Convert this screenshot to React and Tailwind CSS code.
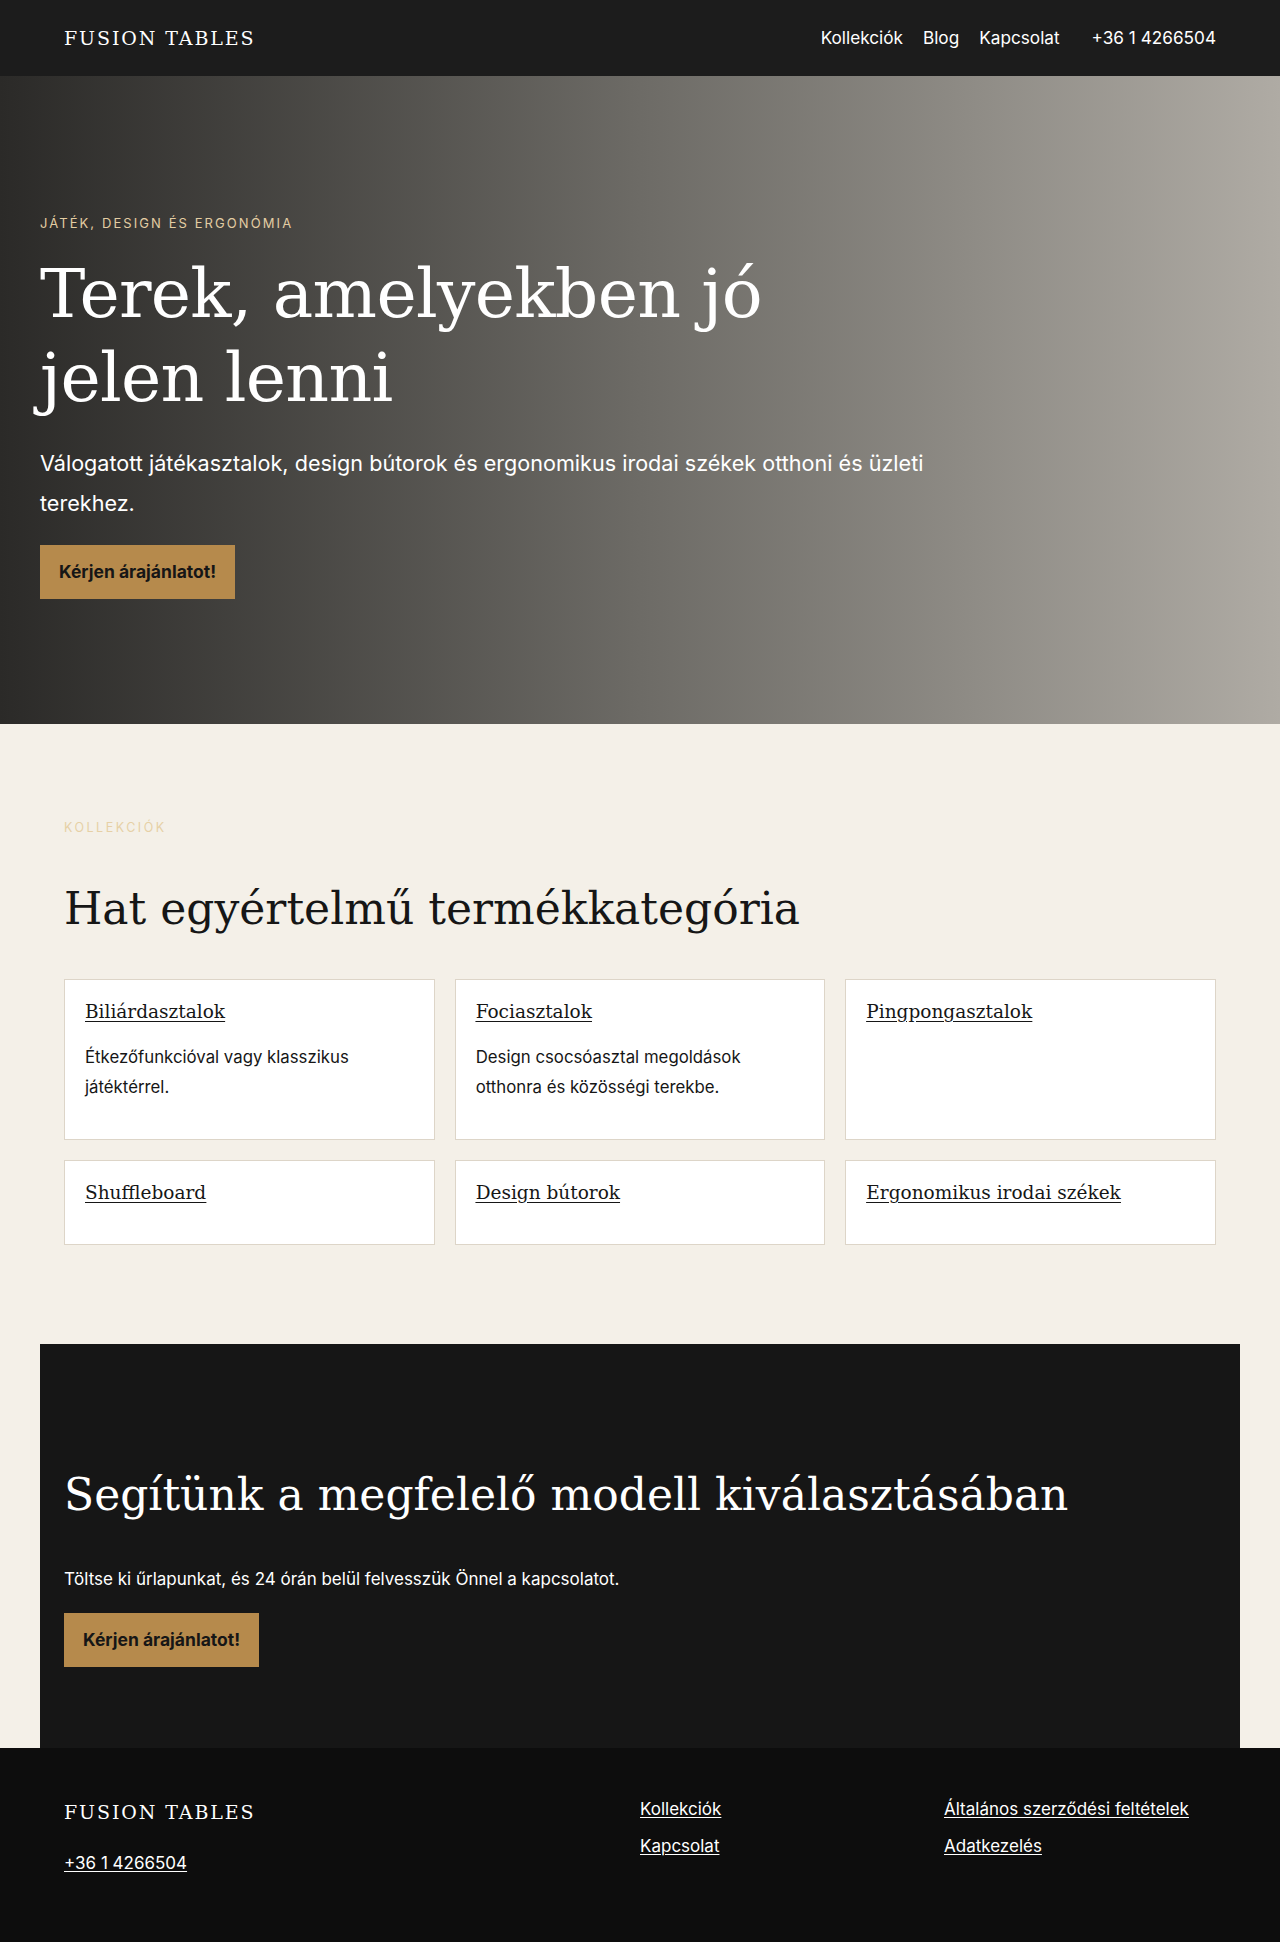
const serif = { fontFamily: '"DejaVu Serif", Georgia, serif' };

const categories = [
  { title: "Biliárdasztalok", text: "Étkezőfunkcióval vagy klasszikus játéktérrel." },
  { title: "Fociasztalok", text: "Design csocsóasztal megoldások otthonra és közösségi terekbe." },
  { title: "Pingpongasztalok" },
  { title: "Shuffleboard" },
  { title: "Design bútorok" },
  { title: "Ergonomikus irodai székek" },
];

function QuoteButton() {
  return (
    <a
      href="#"
      className="inline-block bg-[#b68a4c] px-[19px] py-[15px] text-[17.5px] font-bold leading-6 text-[#161616]"
    >
      Kérjen árajánlatot!
    </a>
  );
}

export default function App() {
  return (
    <div className="flex min-h-[1942px] flex-col bg-[#f4f0e8] font-['Inter',sans-serif] text-[#161616]">
      {/* Top bar */}
      <header className="flex h-[76px] items-center justify-between bg-[#1c1c1c] px-16 text-white">
        <a href="#" style={serif} className="text-[19px] tracking-[0.1em]">
          FUSION TABLES
        </a>
        <nav className="flex items-center text-[17.2px]">
          <a href="#" className="mr-5">Kollekciók</a>
          <a href="#" className="mr-5">Blog</a>
          <a href="#" className="mr-8">Kapcsolat</a>
          <a href="#">+36 1 4266504</a>
        </nav>
      </header>

      {/* Hero */}
      <section className="h-[648px] bg-linear-to-r from-[#2b2a28] via-[#6d6b66] to-[#afaba4] px-10 pt-[137px] text-white">
        <p className="text-[13px] leading-5 tracking-[0.16em] text-[#e3cda3]">JÁTÉK, DESIGN ÉS ERGONÓMIA</p>
        <h1 style={serif} className="mt-[19px] text-[68px] leading-[84px] tracking-[-0.01em]">
          Terek, amelyekben jó
          <br />
          jelen lenni
        </h1>
        <p className="mt-[23px] max-w-[920px] text-[21.6px] leading-10">
          Válogatott játékasztalok, design bútorok és ergonomikus irodai székek otthoni és üzleti terekhez.
        </p>
        <div className="mt-[22px]">
          <QuoteButton />
        </div>
      </section>

      {/* Collections */}
      <section className="px-16 pt-[94px] pb-[99px]">
        <p className="text-[12.5px] leading-5 tracking-[0.2em] text-[#e6d0a6]">KOLLEKCIÓK</p>
        <h2 style={serif} className="mt-[41px] text-[44px] leading-[60px] text-[#161616]">
          Hat egyértelmű termékkategória
        </h2>
        <div className="mt-[40px] grid grid-cols-3 gap-5">
          {categories.map((c) => (
            <div key={c.title} className="border border-[#ddd5c8] bg-white px-5 pt-[18px] pb-[21px]">
              <h3 style={serif} className="text-[18.5px] leading-7 underline underline-offset-[3px]">
                <a href="#">{c.title}</a>
              </h3>
              {c.text && <p className="mt-4 mb-4 text-[16.8px] leading-[30px]">{c.text}</p>}
              {!c.text && <div className="h-4" />}
            </div>
          ))}
        </div>
      </section>

      {/* Call to action */}
      <section className="px-10">
        <div className="bg-[#161616] px-6 pt-[121px] pb-[81px] text-white">
          <h2 style={serif} className="text-[44px] leading-[60px]">
            Segítünk a megfelelő modell kiválasztásában
          </h2>
          <p className="mt-[41px] text-[17px] leading-[27px]">
            Töltse ki űrlapunkat, és 24 órán belül felvesszük Önnel a kapcsolatot.
          </p>
          <div className="mt-5">
            <QuoteButton />
          </div>
        </div>
      </section>

      {/* Footer */}
      <footer className="grid flex-1 grid-cols-[2fr_1fr_1fr] content-start gap-8 bg-[#0d0d0d] px-16 pt-12 pb-16 text-white">
        <div>
          <p style={serif} className="pt-[2px] text-[19px] leading-7 tracking-[0.1em]">FUSION TABLES</p>
          <a href="#" className="mt-6 inline-block text-[17px] leading-[26px] underline underline-offset-2">
            +36 1 4266504
          </a>
        </div>
        <div className="flex flex-col items-start gap-[11px] text-[17px] leading-[26px]">
          <a href="#" className="underline underline-offset-2">Kollekciók</a>
          <a href="#" className="underline underline-offset-2">Kapcsolat</a>
        </div>
        <div className="flex flex-col items-start gap-[11px] text-[17px] leading-[26px]">
          <a href="#" className="underline underline-offset-2">Általános szerződési feltételek</a>
          <a href="#" className="underline underline-offset-2">Adatkezelés</a>
        </div>
      </footer>
    </div>
  );
}
